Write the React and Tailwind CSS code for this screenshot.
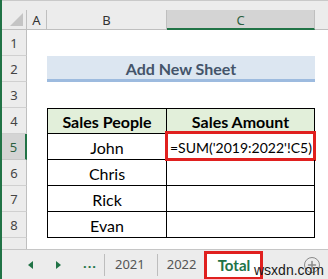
import { Plus } from 'lucide-react'

const rows = [1, 2, 3, 4, 5, 6, 7, 8]
const people = ['John', 'Chris', 'Rick', 'Evan']

function RowHead({ n, selected }) {
  return (
    <div
      className={
        selected
          ? 'flex items-end justify-center pb-[2px] bg-[#d4d4d4] border-r-2 border-r-[#217346] border-b border-b-[#c6c6c6] text-[13px] text-[#2c5f40]'
          : 'flex items-end justify-center pb-[2px] bg-[#ececec] border-r border-r-[#bfbfbf] border-b border-b-[#d0d0d0] text-[13px] text-[#444]'
      }
    >
      {n}
    </div>
  )
}

export default function App() {
  return (
    <div className="w-[328px] h-[279px] overflow-hidden bg-white border-l-2 border-[#217346] flex flex-col font-['Noto_Sans',sans-serif]">
      <div className="h-[10px] bg-[#ececec] border-t border-[#c9c9c9] shrink-0" />

      <div className="grid grid-cols-[25px_20px_120px_148px_1fr] grid-rows-[20px_repeat(8,26px)_11px] shrink-0">
        {/* column headers */}
        <div className="bg-[#ececec] border-r border-b border-[#bfbfbf] flex items-end justify-end p-[3px]">
          <div className="w-0 h-0 border-l-[13px] border-l-transparent border-b-[13px] border-b-[#c4c4c4]" />
        </div>
        <div className="bg-[#ececec] border-r border-b border-[#bfbfbf] flex items-center justify-center pt-[2px] text-[13px] text-[#333]">A</div>
        <div className="bg-[#ececec] border-r border-b border-[#bfbfbf] flex items-center justify-center pt-[2px] text-[13px] text-[#333]">B</div>
        <div className="bg-[#d4d4d4] border-r border-r-[#bfbfbf] border-b-2 border-b-[#217346] flex items-center justify-center pt-[3px] text-[13px] text-[#2c5f40]">C</div>
        <div className="bg-[#ececec] border-b border-[#bfbfbf]" />

        {rows.map((n) => {
          const cells = []
          cells.push(<RowHead key={'h' + n} n={n} selected={n === 5} />)
          cells.push(<div key={'a' + n} />)
          if (n === 2) {
            cells.push(
              <div
                key="title"
                className="col-span-2 bg-[#dce6f1] border-b-[3px] border-[#9dbbdf] flex items-center justify-center pt-[2px] font-['Lato',sans-serif] font-bold text-[16px] text-[#44546a]"
              >
                Add New Sheet
              </div>
            )
          } else if (n === 4) {
            cells.push(
              <div key="hb" className="bg-[#e2efda] border border-black flex items-center justify-center pt-[2px] font-['Lato',sans-serif] font-bold text-[16px] text-black">
                Sales People
              </div>
            )
            cells.push(
              <div key="hc" className="bg-[#e2efda] border-t border-r border-b border-black flex items-center justify-center pt-[2px] font-['Lato',sans-serif] font-bold text-[16px] text-black">
                Sales Amount
              </div>
            )
          } else if (n >= 5) {
            cells.push(
              <div key={'b' + n} className="border-l border-r border-b border-black flex items-center justify-center pt-[2px] font-['Lato',sans-serif] text-[16px] text-black">
                {people[n - 5]}
              </div>
            )
            cells.push(
              <div key={'c' + n} className="relative border-r border-b border-black flex items-center pl-[3px] pt-[2px] font-['Lato',sans-serif] text-[14px] text-black">
                {n === 5 && (
                  <>
                    <span>=SUM('2019:2022'!C5)</span>
                    <div className="absolute left-[-2px] right-[-2px] top-[-3px] bottom-[-2px] border-[3px] border-[#e0201f]" />
                  </>
                )}
              </div>
            )
          } else {
            cells.push(<div key={'b' + n} />)
            cells.push(<div key={'c' + n} />)
          }
          cells.push(<div key={'e' + n} />)
          return cells
        })}

        <div className="bg-[#ececec] border-r border-[#bfbfbf]" />
        <div className="col-span-4" />
      </div>

      <div className="relative flex-1 bg-[#ececec] border-t border-[#c6c6c6] flex items-center text-[13px] text-[#555]">
        <div className="w-0 h-0 ml-[26px] border-y-[4px] border-y-transparent border-r-[5px] border-r-[#217346]" />
        <div className="w-0 h-0 ml-[23px] border-y-[4px] border-y-transparent border-l-[5px] border-l-[#217346]" />
        <span className="ml-[22px] font-bold text-[#217346] tracking-[1px] -translate-y-[1px]">...</span>
        <div className="ml-[7px] w-px h-[22px] bg-[#bdbdbd]" />
        <span className="ml-[10px]">2021</span>
        <div className="ml-[12px] w-px h-[22px] bg-[#bdbdbd]" />
        <span className="ml-[9px]">2022</span>
        <div className="ml-[8px] self-stretch mt-[1px] w-[59px] bg-white border-[3px] border-[#e0201f] flex items-center justify-center font-['Lato',sans-serif] font-bold text-[15px] text-[#217346]">
          Total
        </div>
        <div className="ml-[41px] w-[16px] h-[16px] rounded-full border border-[#8a8a8a] flex items-center justify-center">
          <Plus size={12} strokeWidth={3} className="text-[#8a8a8a]" />
        </div>
        <span className="absolute left-[252px] top-[10px] font-['Liberation_Sans',sans-serif] text-[14px] text-[#1a1a1a]">wsxdn.com</span>
      </div>
    </div>
  )
}
